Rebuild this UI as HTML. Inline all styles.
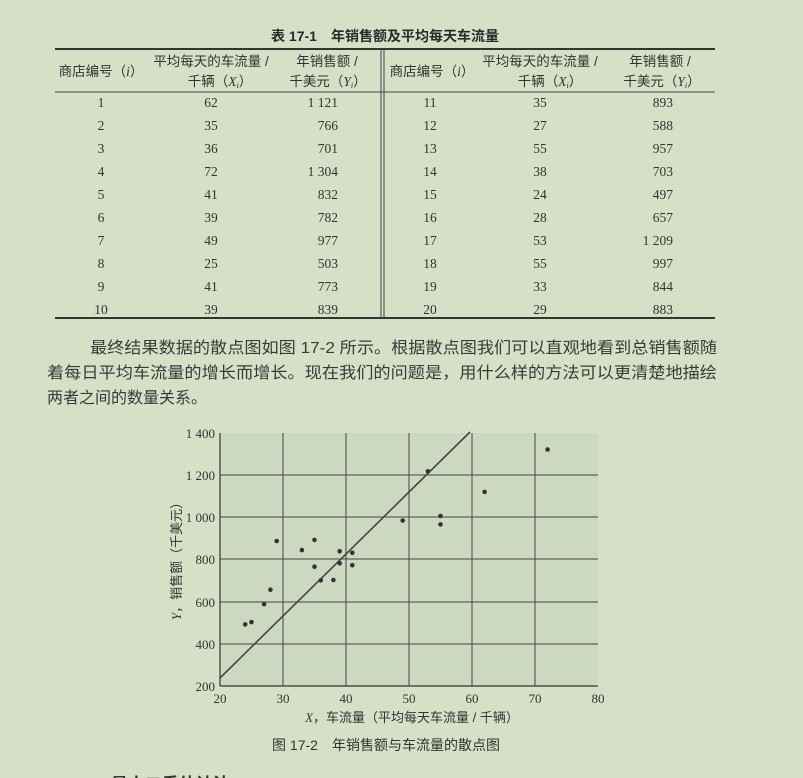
<!DOCTYPE html>
<html><head><meta charset="utf-8"><style>
html,body{margin:0;padding:0;background:#d5e0c6;}
svg{display:block}
.s{font-family:"Liberation Sans","Noto Sans CJK SC",sans-serif;}
.r{font-family:"Liberation Serif","Noto Serif CJK SC",serif;}
</style></head><body>
<svg width="803" height="778" viewBox="0 0 803 778" xmlns="http://www.w3.org/2000/svg">
<rect width="803" height="778" fill="#d5e0c6"/>
<text x="385" y="41" text-anchor="middle" class="s" font-size="14" font-weight="bold" fill="#2a2a2a">表 17-1　年销售额及平均每天车流量</text>
<line x1="55" y1="49" x2="715" y2="49" stroke="#333" stroke-width="2"/>
<line x1="55" y1="92" x2="715" y2="92" stroke="#444" stroke-width="1"/>
<line x1="55" y1="318" x2="715" y2="318" stroke="#333" stroke-width="2"/>
<line x1="381" y1="49" x2="381" y2="318" stroke="#444" stroke-width="1"/>
<line x1="384" y1="49" x2="384" y2="318" stroke="#444" stroke-width="1"/>
<g class="s" font-size="13.5" fill="#333" text-anchor="middle">
<text x="101" y="76">商店编号（<tspan class="r" font-style="italic">i</tspan>）</text>
<text x="211" y="66">平均每天的车流量 /</text>
<text x="220" y="86">千辆（<tspan class="r" font-style="italic">X<tspan font-size="8" dy="2">i</tspan></tspan><tspan dy="-2">）</tspan></text>
<text x="327" y="66">年销售额 /</text>
<text x="328" y="86">千美元（<tspan class="r" font-style="italic">Y<tspan font-size="8" dy="2">i</tspan></tspan><tspan dy="-2">）</tspan></text>
<text x="432" y="76">商店编号（<tspan class="r" font-style="italic">i</tspan>）</text>
<text x="540" y="66">平均每天的车流量 /</text>
<text x="550" y="86">千辆（<tspan class="r" font-style="italic">X<tspan font-size="8" dy="2">i</tspan></tspan><tspan dy="-2">）</tspan></text>
<text x="660" y="66">年销售额 /</text>
<text x="662" y="86">千美元（<tspan class="r" font-style="italic">Y<tspan font-size="8" dy="2">i</tspan></tspan><tspan dy="-2">）</tspan></text>
</g>
<g class="r" font-size="13.5" fill="#333">
<g text-anchor="middle">
<text x="101" y="107">1</text><text x="211" y="107">62</text><text x="430" y="107">11</text><text x="540" y="107">35</text>
<text x="101" y="130">2</text><text x="211" y="130">35</text><text x="430" y="130">12</text><text x="540" y="130">27</text>
<text x="101" y="153">3</text><text x="211" y="153">36</text><text x="430" y="153">13</text><text x="540" y="153">55</text>
<text x="101" y="176">4</text><text x="211" y="176">72</text><text x="430" y="176">14</text><text x="540" y="176">38</text>
<text x="101" y="199">5</text><text x="211" y="199">41</text><text x="430" y="199">15</text><text x="540" y="199">24</text>
<text x="101" y="222">6</text><text x="211" y="222">39</text><text x="430" y="222">16</text><text x="540" y="222">28</text>
<text x="101" y="245">7</text><text x="211" y="245">49</text><text x="430" y="245">17</text><text x="540" y="245">53</text>
<text x="101" y="268">8</text><text x="211" y="268">25</text><text x="430" y="268">18</text><text x="540" y="268">55</text>
<text x="101" y="291">9</text><text x="211" y="291">41</text><text x="430" y="291">19</text><text x="540" y="291">33</text>
<text x="101" y="314">10</text><text x="211" y="314">39</text><text x="430" y="314">20</text><text x="540" y="314">29</text>
</g>
<g text-anchor="end">
<text x="338" y="107">1 121</text><text x="673" y="107">893</text>
<text x="338" y="130">766</text><text x="673" y="130">588</text>
<text x="338" y="153">701</text><text x="673" y="153">957</text>
<text x="338" y="176">1 304</text><text x="673" y="176">703</text>
<text x="338" y="199">832</text><text x="673" y="199">497</text>
<text x="338" y="222">782</text><text x="673" y="222">657</text>
<text x="338" y="245">977</text><text x="673" y="245">1 209</text>
<text x="338" y="268">503</text><text x="673" y="268">997</text>
<text x="338" y="291">773</text><text x="673" y="291">844</text>
<text x="338" y="314">839</text><text x="673" y="314">883</text>
</g>
</g>
<g class="s" font-size="16" fill="#3a3a3a">
<text x="90" y="353" textLength="627" lengthAdjust="spacingAndGlyphs">最终结果数据的散点图如图 17-2 所示。根据散点图我们可以直观地看到总销售额随</text>
<text x="47" y="378" textLength="670" lengthAdjust="spacingAndGlyphs">着每日平均车流量的增长而增长。现在我们的问题是，用什么样的方法可以更清楚地描绘</text>
<text x="47" y="403">两者之间的数量关系。</text>
</g>
<rect x="220" y="433" width="378" height="253" fill="#cdd8c1"/>
<g stroke="#444" stroke-width="1">
<line x1="283" y1="433" x2="283" y2="686"/><line x1="346" y1="433" x2="346" y2="686"/>
<line x1="409" y1="433" x2="409" y2="686"/><line x1="472" y1="433" x2="472" y2="686"/>
<line x1="535" y1="433" x2="535" y2="686"/>
<line x1="220" y1="644" x2="598" y2="644"/><line x1="220" y1="602" x2="598" y2="602"/>
<line x1="220" y1="559" x2="598" y2="559"/><line x1="220" y1="517" x2="598" y2="517"/>
<line x1="220" y1="475" x2="598" y2="475"/>
</g>
<line x1="220" y1="433" x2="220" y2="686" stroke="#333" stroke-width="1.2"/>
<line x1="220" y1="686" x2="598" y2="686" stroke="#333" stroke-width="1.2"/>
<line x1="220" y1="678" x2="470" y2="432" stroke="#444" stroke-width="1.6"/>
<g fill="#333">
<circle cx="484.6" cy="491.9" r="2.3"/><circle cx="314.5" cy="566.7" r="2.3"/><circle cx="320.8" cy="580.4" r="2.3"/>
<circle cx="547.6" cy="449.5" r="2.3"/><circle cx="352.3" cy="552.8" r="2.3"/><circle cx="339.7" cy="563.3" r="2.3"/>
<circle cx="402.7" cy="520.5" r="2.3"/><circle cx="251.5" cy="622.1" r="2.3"/><circle cx="352.3" cy="565.2" r="2.3"/>
<circle cx="339.7" cy="551.3" r="2.3"/><circle cx="314.5" cy="539.9" r="2.3"/><circle cx="264.1" cy="604.2" r="2.3"/>
<circle cx="440.5" cy="524.4" r="2.3"/><circle cx="333.4" cy="580.0" r="2.3"/><circle cx="245.2" cy="624.4" r="2.3"/>
<circle cx="270.4" cy="589.7" r="2.3"/><circle cx="427.9" cy="471.3" r="2.3"/><circle cx="440.5" cy="516.0" r="2.3"/>
<circle cx="301.9" cy="550.1" r="2.3"/><circle cx="276.7" cy="541.0" r="2.3"/>
</g>
<g class="r" font-size="13" fill="#333" text-anchor="end">
<text x="215" y="438">1 400</text><text x="215" y="480">1 200</text><text x="215" y="522">1 000</text>
<text x="215" y="564">800</text><text x="215" y="607">600</text><text x="215" y="649">400</text><text x="215" y="691">200</text>
</g>
<g class="r" font-size="13" fill="#333" text-anchor="middle">
<text x="220" y="703">20</text><text x="283" y="703">30</text><text x="346" y="703">40</text><text x="409" y="703">50</text>
<text x="472" y="703">60</text><text x="535" y="703">70</text><text x="598" y="703">80</text>
</g>
<text x="412" y="722" text-anchor="middle" class="s" font-size="13" fill="#333"><tspan class="r" font-style="italic">X</tspan>，车流量（平均每天车流量 / 千辆）</text>
<text transform="translate(181,558) rotate(-90)" text-anchor="middle" class="s" font-size="13" fill="#333"><tspan class="r" font-style="italic">Y</tspan>，销售额（千美元）</text>
<text x="386" y="750" text-anchor="middle" class="s" font-size="14" fill="#333">图 17-2　年销售额与车流量的散点图</text>
<text x="92" y="790" class="s" font-size="17" font-weight="bold" fill="#333">1. 最小二乘估计法</text>
</svg>
</body></html>
